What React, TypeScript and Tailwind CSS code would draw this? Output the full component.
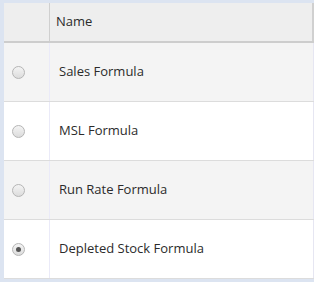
const rows = [
  { name: 'Sales Formula', checked: false },
  { name: 'MSL Formula', checked: false },
  { name: 'Run Rate Formula', checked: false },
  { name: 'Depleted Stock Formula', checked: true },
]

const Radio = ({ checked }: { checked: boolean }) => (
  <span className="flex h-[13px] w-[13px] items-center justify-center rounded-full border border-[#b5b5b5] bg-[linear-gradient(180deg,#f4f4f4,#dcdcdc)]">
    {checked && <span className="h-[5px] w-[5px] rounded-full bg-[#555]" />}
  </span>
)

const App = () => (
  <div className="h-[282px] w-[314px] bg-[#dce4f1] pl-[4px] pt-[3px] font-['Open_Sans',sans-serif] text-[13px] text-[#2b2b2b]">
    <div className="flex h-[40px] border-b-2 border-[#cdcdcd] bg-[#eeeeee]">
      <div className="w-[46px] border-r border-[#cfcfcf]" />
      <div className="flex flex-1 items-center border-r-2 border-[#d0d0d0] pl-[6px]">Name</div>
    </div>
    {rows.map((r, i) => (
      <div
        key={r.name}
        className={`flex h-[59px] border-b border-[#dcdcdc] ${i % 2 === 0 ? 'bg-[#f4f4f4]' : 'bg-white'}`}
      >
        <div className="flex w-[46px] items-center border-r border-[#eaeaf8] pl-[8px]">
          <Radio checked={r.checked} />
        </div>
        <div className="flex flex-1 items-center border-r border-[#e6e6f2] pl-[9px]">{r.name}</div>
      </div>
    ))}
  </div>
)

export default App
